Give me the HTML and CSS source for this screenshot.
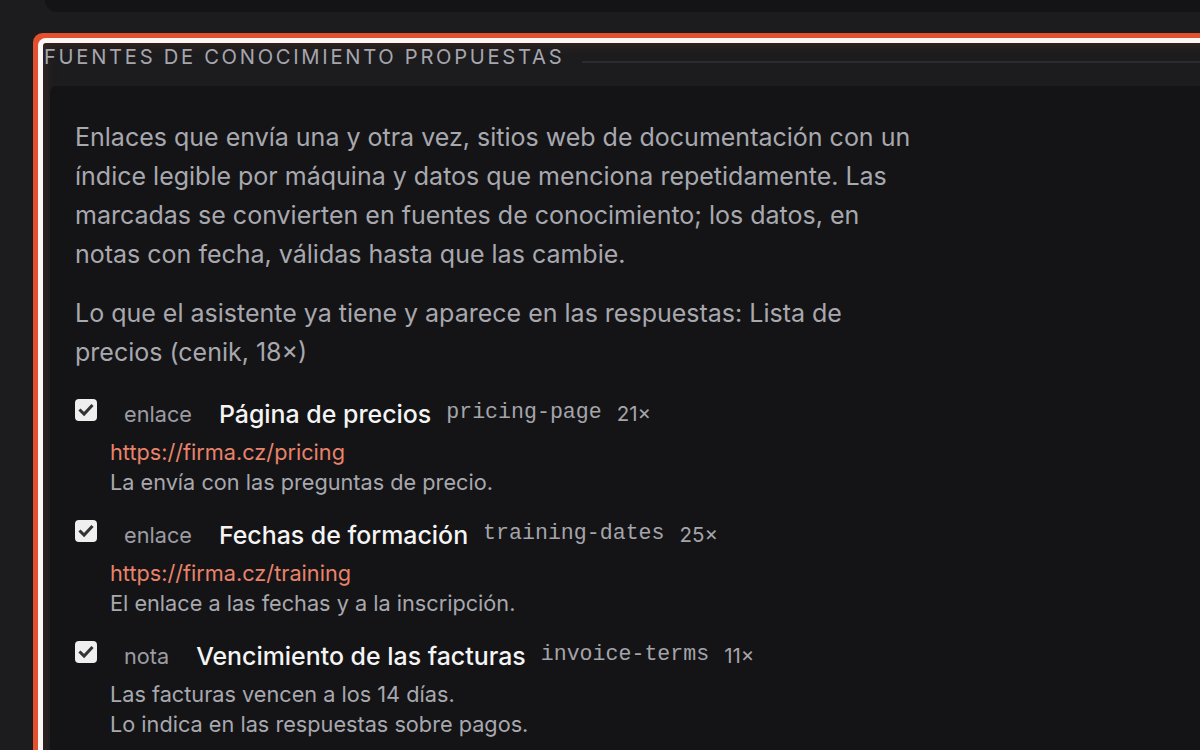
FILE: index.html
```html
<!DOCTYPE html>
<html lang="es">
<head>
<meta charset="utf-8">
<title>Fuentes de conocimiento propuestas</title>
<link rel="stylesheet" href="styles.css">
</head>
<body>
<div class="top-card"></div>
<section class="panel">
  <header class="panel-head">
    <h2 class="panel-title">FUENTES DE CONOCIMIENTO PROPUESTAS</h2>
    <span class="panel-rule"></span>
  </header>
  <div class="card">
    <p class="intro">Enlaces que envía una y otra vez, sitios web de documentación con un índice legible por máquina y datos que menciona repetidamente. Las marcadas se convierten en fuentes de conocimiento; los datos, en notas con fecha, válidas hasta que las cambie.</p>
    <p class="intro">Lo que el asistente ya tiene y aparece en las respuestas: Lista de precios (cenik, 18×)</p>
    <ul class="items">
      <li class="item">
        <div class="row">
          <span class="check"><svg viewBox="0 0 22 22" width="22" height="22"><path d="M5.5 11.5l3.6 3.6 7.4-8" fill="none" stroke="#333" stroke-width="3" stroke-linecap="square"/></svg></span>
          <span class="kind">enlace</span>
          <span class="name">Página de precios</span>
          <code class="slug">pricing-page</code>
          <span class="count">21×</span>
        </div>
        <div class="sub">
          <div class="url">https://firma.cz/pricing</div>
          <div class="desc">La envía con las preguntas de precio.</div>
        </div>
      </li>
      <li class="item">
        <div class="row">
          <span class="check"><svg viewBox="0 0 22 22" width="22" height="22"><path d="M5.5 11.5l3.6 3.6 7.4-8" fill="none" stroke="#333" stroke-width="3" stroke-linecap="square"/></svg></span>
          <span class="kind">enlace</span>
          <span class="name">Fechas de formación</span>
          <code class="slug">training-dates</code>
          <span class="count">25×</span>
        </div>
        <div class="sub">
          <div class="url">https://firma.cz/training</div>
          <div class="desc">El enlace a las fechas y a la inscripción.</div>
        </div>
      </li>
      <li class="item">
        <div class="row">
          <span class="check"><svg viewBox="0 0 22 22" width="22" height="22"><path d="M5.5 11.5l3.6 3.6 7.4-8" fill="none" stroke="#333" stroke-width="3" stroke-linecap="square"/></svg></span>
          <span class="kind">nota</span>
          <span class="name">Vencimiento de las facturas</span>
          <code class="slug">invoice-terms</code>
          <span class="count">11×</span>
        </div>
        <div class="sub">
          <div class="desc">Las facturas vencen a los 14 días.</div>
          <div class="desc">Lo indica en las respuestas sobre pagos.</div>
        </div>
      </li>
    </ul>
  </div>
</section>
</body>
</html>
```
FILE: styles.css
```css
html, body {
  margin: 0;
  padding: 0;
}
body {
  background: #1c1c1f;
  width: 1200px;
  height: 750px;
  overflow: hidden;
  font-family: Inter, "Noto Sans", sans-serif;
}
.top-card {
  height: 12px;
  margin-left: 45px;
  width: 1300px;
  background: #141416;
  border-bottom-left-radius: 14px;
}
.panel {
  margin: 31px 0 0 43px;
  width: 1300px;
  height: 800px;
  background: #1c1c1f;
  border-radius: 3px;
  box-shadow: 0 0 0 5px #fdf6f4, 0 0 0 10px #e2512f, inset 0 0 14px rgba(226, 81, 47, 0.22);
}
.panel-head {
  display: flex;
  align-items: flex-start;
  height: 43px;
}
.panel-title {
  margin: 0;
  padding-left: 1px;
  font-size: 20.2px;
  line-height: 28px;
  font-weight: 400;
  letter-spacing: 2.7px;
  color: #a6a6ad;
  white-space: nowrap;
}
.panel-rule {
  flex: 1;
  height: 2px;
  margin: 18px 0 0 18px;
  background: #2c2c30;
}
.card {
  margin-left: 7px;
  height: 760px;
  background: #141416;
  border-top-left-radius: 6px;
  padding: 32px 0 0 25px;
}
.intro {
  margin: 0 0 20px;
  max-width: 848px;
  font-size: 25px;
  line-height: 39px;
  color: #a8a8af;
}
.items {
  list-style: none;
  margin: 0;
  padding: 0;
  display: flex;
  flex-direction: column;
  gap: 16px;
}
.row {
  display: flex;
  align-items: center;
  box-sizing: border-box;
  height: 40px;
  padding-top: 3px;
}
.check {
  width: 22px;
  height: 22px;
  border-radius: 4px;
  background: #efeff0;
  display: block;
  margin-right: 27px;
  margin-top: -8px;
}
.check svg {
  display: block;
}
.kind {
  font-size: 21.7px;
  color: #9c9ca3;
  margin-right: 27px;
}
.name {
  font-size: 24.9px;
  font-weight: 500;
  color: #f4f4f5;
  margin-right: 15px;
}
.slug {
  font-family: "Liberation Mono", "DejaVu Sans Mono", monospace;
  font-size: 21.6px;
  color: #a4a4ab;
  margin-right: 15px;
  margin-top: -4px;
}
.count {
  font-size: 20.5px;
  color: #a4a4ab;
}
.sub {
  padding-left: 35px;
  margin-top: 5px;
}
.url {
  font-size: 21.7px;
  line-height: 30px;
  color: #e8836b;
}
.desc {
  font-size: 21.7px;
  line-height: 30px;
  color: #a8a8af;
}
```
